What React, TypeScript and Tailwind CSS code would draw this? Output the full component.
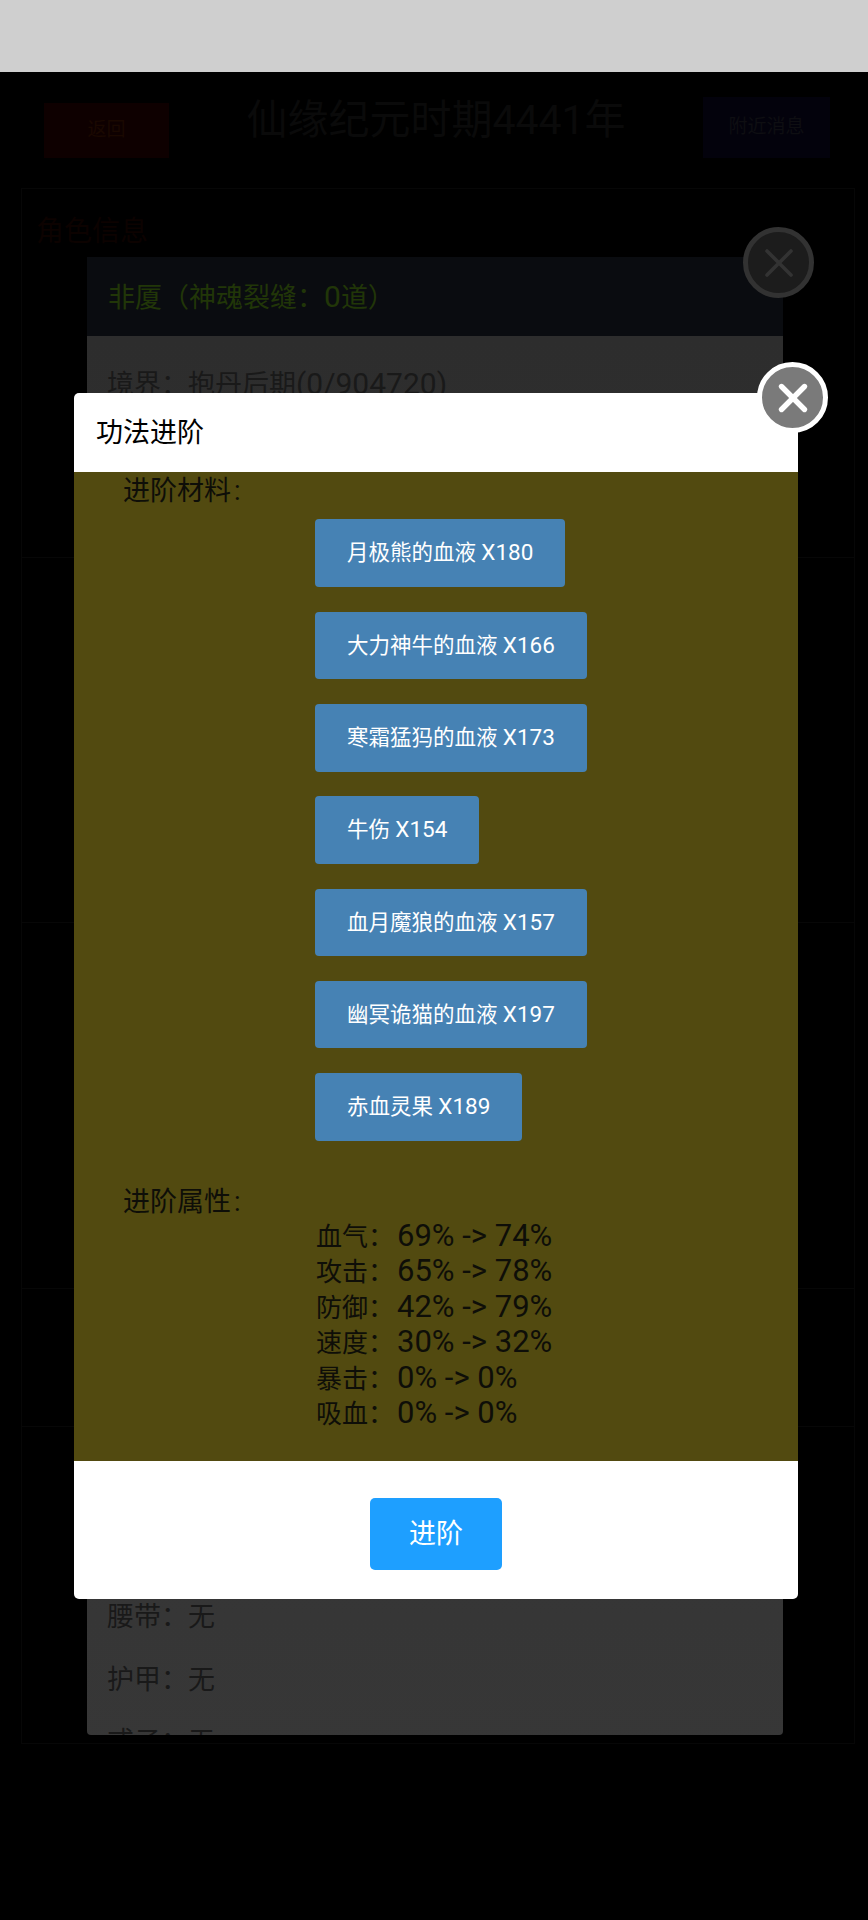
import { X } from 'lucide-react'

const MATERIALS = [
  ['月极熊的血液', 'X180'],
  ['大力神牛的血液', 'X166'],
  ['寒霜猛犸的血液', 'X173'],
  ['牛伤', 'X154'],
  ['血月魔狼的血液', 'X157'],
  ['幽冥诡猫的血液', 'X197'],
  ['赤血灵果', 'X189'],
]

const STATS = [
  ['血气：', '69% -> 74%'],
  ['攻击：', '65% -> 78%'],
  ['防御：', '42% -> 79%'],
  ['速度：', '30% -> 32%'],
  ['暴击：', '0% -> 0%'],
  ['吸血：', '0% -> 0%'],
]

function DimmedPage() {
  return (
    <div className="flex flex-col">
      {/* Header behind the overlay */}
      <div className="flex items-start h-[116px] pt-[25px] pl-[44px] pr-[38px]">
        <div className="w-[125px] h-[55px] mt-[6px] bg-[#0e0000] flex items-center justify-center text-[19px] text-[#1a0800]">
          返回
        </div>
        <div className="flex-1 flex flex-col items-center">
          <p className="text-[41px] leading-[46px] text-[#0a0a0a] whitespace-nowrap">仙缘纪元时期4441年</p>
        </div>
        <div className="w-[127px] h-[61px] bg-[#03020c] flex items-center justify-center text-[19px] text-[#0e0e12]">
          附近消息
        </div>
      </div>

      {/* Faint section frame */}
      <div className="ml-[21px] mr-[13px] h-[1556px] border border-[#070707] flex flex-col">
        <div className="h-[369px] border-b border-[#070707] pl-[14px] pt-[22px]">
          <p className="text-[28px] text-[#0c0200]">角色信息</p>
        </div>
        <div className="h-[365px] border-b border-[#070707]" />
        <div className="h-[366px] border-b border-[#070707]" />
        <div className="h-[138px] border-b border-[#070707]" />
      </div>
    </div>
  )
}

function CharacterDialog() {
  return (
    <div className="absolute left-[87px] top-[257px] w-[696px] h-[1478px] rounded-b-[4px] overflow-hidden flex flex-col">
      <div className="h-[79px] shrink-0 bg-[#0a0c10] flex items-center px-[21px] text-[27px] text-[#213608]">
        <span>非厦（神魂裂缝：<span className="text-[30px]">0</span>道）</span>
      </div>
      <div className="flex-1 bg-gradient-to-b from-[#2d2d2d] to-[#373737] px-[20px] text-[27px] text-[#191919]">
        <p className="mt-[31px] h-[36px] leading-[36px]">
          境界：抱丹后期<span className="text-[30px] leading-none">(0/904720)</span>
        </p>
        <p className="mt-[1196px] h-[36px] leading-[36px]">腰带：无</p>
        <p className="mt-[26.5px] h-[36px] leading-[36px]">护甲：无</p>
        <p className="mt-[26.5px] h-[36px] leading-[36px]">戒子：无</p>
      </div>
    </div>
  )
}

export default function App() {
  return (
    <div className="relative w-[868px] h-[1920px] bg-black overflow-hidden font-['Roboto','Noto_Sans_CJK_SC',sans-serif]">
      <div className="h-[72px] bg-[#cfcfcf]" />
      <DimmedPage />
      <CharacterDialog />

      {/* Close button of the dialog behind */}
      <div className="absolute left-[743px] top-[227px] w-[71px] h-[71px] rounded-full bg-[#1c1c1c] border-[5px] border-[#323232] flex items-center justify-center">
        <X size={48} strokeWidth={1.8} color="#333333" />
      </div>

      {/* Upgrade dialog */}
      <div className="absolute left-[74px] top-[393px] w-[724px] rounded-[5px] overflow-hidden flex flex-col">
        <div className="h-[79px] bg-white flex items-center px-[22px] pt-[1px] text-[27px] text-black">功法进阶</div>

        <div className="h-[989px] bg-[#524a10] pl-[49px] text-[26px] leading-[35.4px] text-[#0e0e08]">
          <p className="pt-[2px] text-[27px]">进阶材料<span className="ml-[3px]">:</span></p>
          <div className="flex flex-col items-start gap-[24.8px] ml-[192px] mt-[10px]">
            {MATERIALS.map(([name, count]) => (
              <button
                key={name}
                className="h-[67.5px] px-[32px] rounded-[4px] bg-[#4682b4] text-[21.5px] text-white whitespace-nowrap"
              >
                {name} <span className="text-[22.5px]">{count}</span>
              </button>
            ))}
          </div>
          <p className="mt-[44px] text-[27px]">进阶属性<span className="ml-[3px]">:</span></p>
          <div className="ml-[193px]">
            {STATS.map(([label, value]) => (
              <p key={label} className="h-[35.4px] whitespace-nowrap">
                {label}
                <span className="ml-[3px] text-[31px] leading-none">{value}</span>
              </p>
            ))}
          </div>
        </div>

        <div className="h-[138px] bg-white flex justify-center pt-[37px]">
          <button className="w-[132px] h-[72px] rounded-[5px] bg-[#1e9fff] text-[27px] text-white">进阶</button>
        </div>
      </div>

      {/* Close button of the upgrade dialog */}
      <div className="absolute left-[757px] top-[362px] w-[71px] h-[71px] rounded-full bg-[#7a7a7a] border-[5px] border-white flex items-center justify-center">
        <X size={46} strokeWidth={2.8} color="#ffffff" />
      </div>
    </div>
  )
}
